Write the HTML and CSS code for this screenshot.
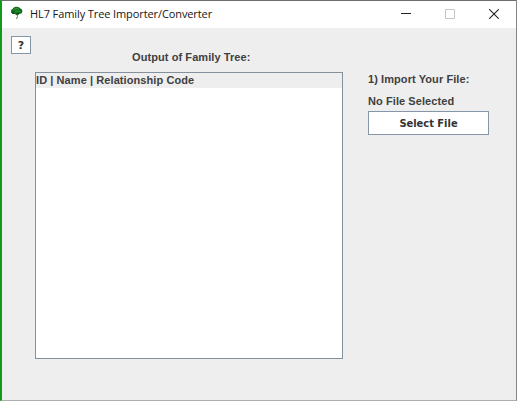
FILE: index.html
```html
<!DOCTYPE html>
<html lang="en">
<head>
<meta charset="utf-8">
<title>HL7 Family Tree Importer/Converter</title>
<link rel="stylesheet" href="styles.css">
</head>
<body>
<div class="window">
  <header class="titlebar">
    <svg class="tree" width="14" height="14" viewBox="0 0 14 14">
      <path d="M6.800 8 7.500 10.500 6.500 13" fill="none" stroke="#5d655b" stroke-width="1"/>
      <path d="M1 5.200C1 3.800 2 3.300 2.800 2.800 3.500 1 5.300.7 6.500.7c1.700 0 3.200.7 3.900 1.900C12 3.200 12.600 4.500 12.300 6c-.5 1.500-1.700 1.700-2.600 1.700C8.600 9.300 6 9.400 5 8 3 8.500 1 7.200 1 5.200Z" fill="#126b1d"/>
      <path d="M3.500 4 6 2.500l3 .5M5 6l3-1 2.500 1" fill="none" stroke="#2f9436" stroke-width="1.200"/>
      <path d="M1.500 6.500 4 7.500M7 7.500h2" stroke="#0b4315" stroke-width="1"/>
    </svg>
    <h1 class="title">HL7 Family Tree Importer/Converter</h1>
    <div class="controls">
      <svg width="10" height="10" viewBox="0 0 10 10"><path d="M0 4.500h10" stroke="#222"/></svg>
      <svg width="10" height="10" viewBox="0 0 10 10"><path d="M.5.5h9v9h-9z" fill="none" stroke="#c6c6c6"/></svg>
      <svg width="10" height="10" viewBox="0 0 10 10"><path d="m.3.3 9.400 9.400m0-9.400L.3 9.700" stroke="#222" stroke-width="1.100"/></svg>
    </div>
  </header>
  <main class="content">
    <button class="button help">?</button>
    <section class="output">
      <h2 class="label output-label">Output of Family Tree:</h2>
      <div class="list"><div class="row">ID | Name | Relationship Code</div></div>
    </section>
    <section class="import">
      <p class="label step">1) Import Your File:</p>
      <p class="label status">No File Selected</p>
      <button class="button select">Select File</button>
    </section>
  </main>
</div>
</body>
</html>
```
FILE: styles.css
```css
* { box-sizing: border-box; }
body { margin: 0; }
.window {
  width: 517px;
  height: 401px;
  display: flex;
  flex-direction: column;
  background: #eee;
  border: 1px solid #858585;
  border-top-color: #6e6e6e;
  border-bottom-color: #adadad;
  border-left: 2px solid #119b18;
}
.titlebar {
  height: 27px;
  flex: none;
  display: flex;
  align-items: center;
  background: #fff;
  padding: 0 17px 2px 8px;
}
.tree { flex: none; margin-top: -1px; }
.title {
  margin: 0 0 0 6px;
  font: 400 11px/16px "Open Sans", sans-serif;
  letter-spacing: -0.1px;
  color: #151515;
  white-space: nowrap;
}
.controls {
  margin-left: auto;
  display: flex;
  gap: 34px;
}
.controls svg { display: block; }
.content {
  flex: 1;
  display: grid;
  grid-template-columns: 33px 308px 1fr;
  align-items: start;
}
.button {
  display: block;
  padding: 0;
  border: 1px solid #8496a8;
  background: #fff;
  color: #333;
  font: 700 11px/1 "DejaVu Sans", sans-serif;
}
.help {
  width: 20px;
  height: 18px;
  margin: 8px 0 0 9px;
}
.label, .row {
  margin: 0;
  font: 700 11px/14px "Liberation Sans", sans-serif;
  letter-spacing: 0.08px;
  color: #404040;
  white-space: nowrap;
}
.output { padding-top: 22px; }
.output-label { margin-left: 97px; }
.list {
  height: 287px;
  margin-top: 8px;
  background: #fff;
  border: 1px solid #84919d;
}
.row {
  height: 15px;
  line-height: 15px;
  background: #eee;
}
.import { padding: 44px 0 0 25px; }
.status { margin-top: 8px; }
.select {
  width: 121px;
  height: 24px;
  margin-top: 3px;
  padding-top: 1px;
  font-family: "DejaVu Sans Condensed", "DejaVu Sans", sans-serif;
  font-stretch: condensed;
}
```
